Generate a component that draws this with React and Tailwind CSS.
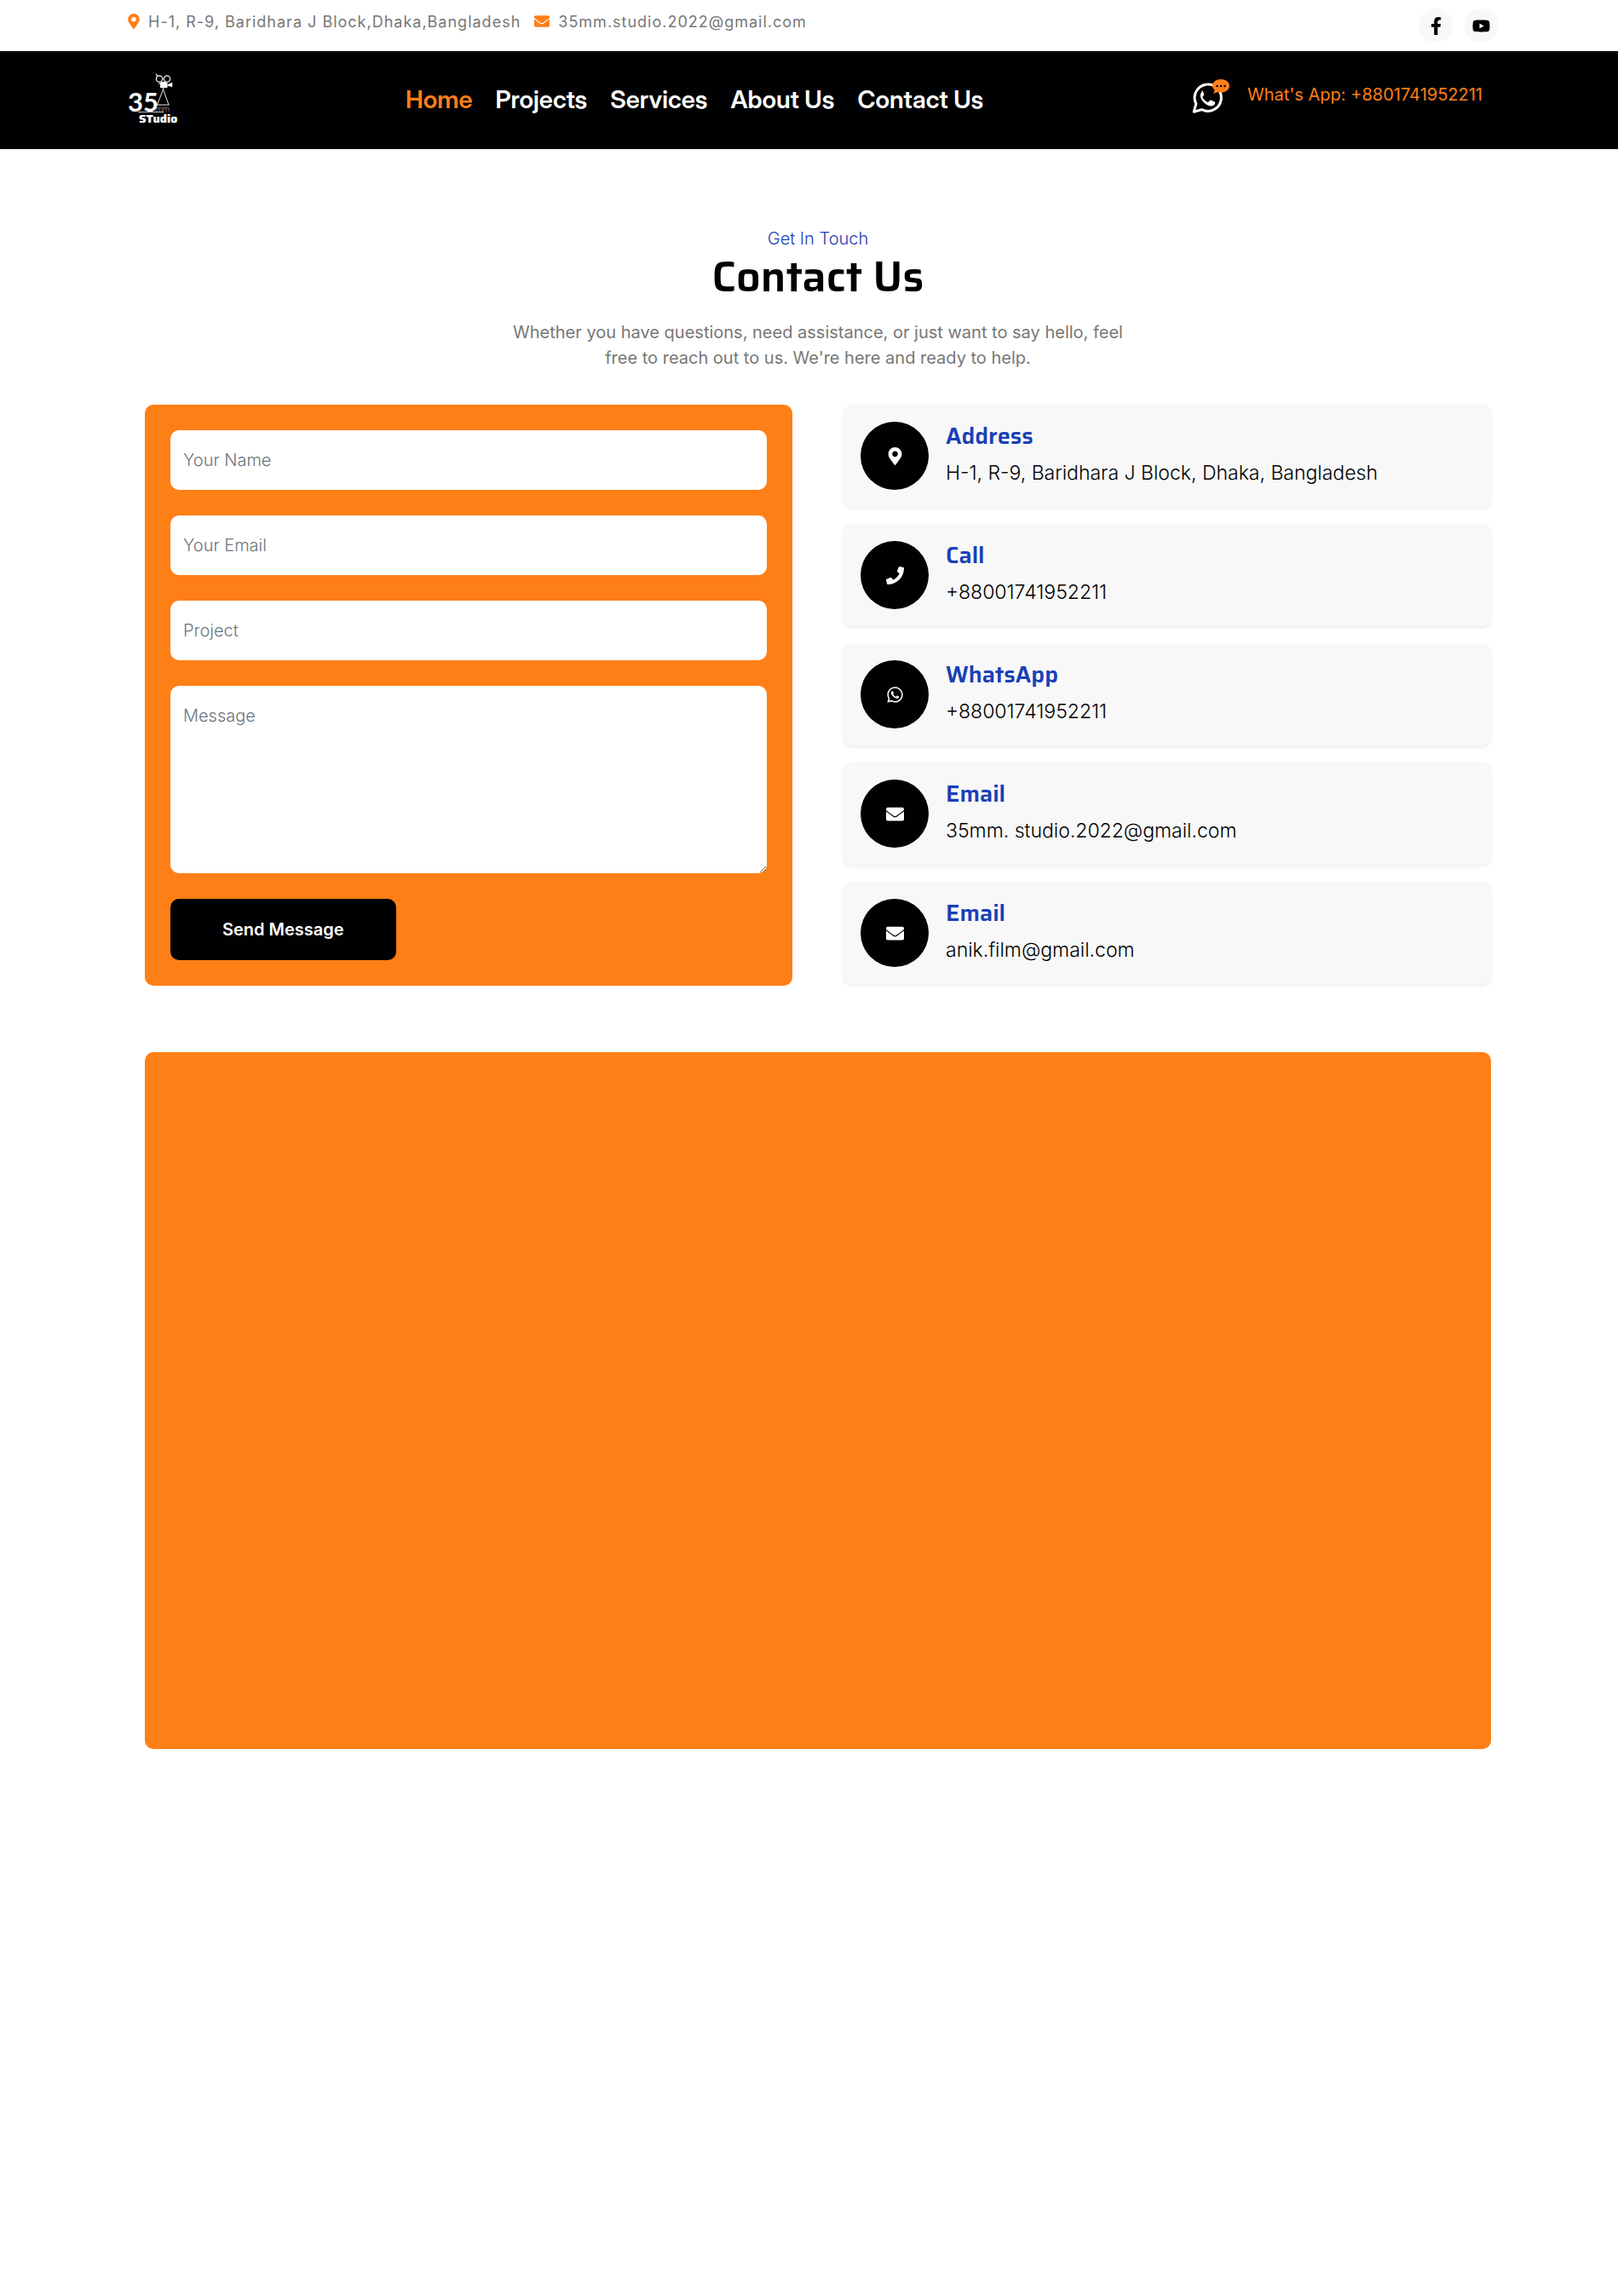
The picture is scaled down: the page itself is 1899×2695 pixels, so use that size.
import React from "react";
import { FaMapMarkerAlt, FaEnvelope, FaFacebookF, FaYoutube, FaPhone, FaWhatsapp } from "react-icons/fa";

const NAV = ["Home", "Projects", "Services", "About Us", "Contact Us"];

const CARDS = [
  { icon: FaMapMarkerAlt, title: "Address", text: "H-1, R-9, Baridhara J Block, Dhaka, Bangladesh" },
  { icon: FaPhone, title: "Call", text: "+88001741952211" },
  { icon: FaWhatsapp, title: "WhatsApp", text: "+88001741952211" },
  { icon: FaEnvelope, title: "Email", text: "35mm. studio.2022@gmail.com" },
  { icon: FaEnvelope, title: "Email", text: "anik.film@gmail.com" },
];

const FIELD =
  "block w-full rounded-[10px] bg-white px-[15px] text-[20px] leading-[30px] font-light outline-none placeholder:text-[#6c757d] placeholder:opacity-100";

function Logo() {
  return (
    <svg viewBox="0 0 64 66" className="h-[66px] w-[64px]" role="img" aria-label="35mm Studio">
      <g fill="none" stroke="#fff">
        <circle cx="37" cy="7.5" r="3.7" strokeWidth="1.2" />
        <circle cx="46" cy="7.5" r="3.7" strokeWidth="1.2" />
        <path d="M33 1.500l2 3.500M39 11.500h6M36 13h2" strokeWidth="1.2" />
        <path d="M41.500 18v3M41.500 20l-7 18M41.500 20l6.500 18M34 38h14.500" strokeWidth="0.9" />
        <path d="M12 46.500h30" strokeWidth="0.8" />
      </g>
      <rect x="38" y="12" width="8.500" height="6" fill="#fff" />
      <path d="M46.500 14.200l5.800-2.400v5.400l-5.800-1.600z" fill="#fff" />
      <text x="0" y="46" fill="#fff" fontFamily="Lato" fontWeight="700" fontSize="31">35</text>
      <text x="33" y="46" fill="#bbb" fontFamily="Roboto" fontWeight="300" fontSize="9">mm</text>
      <text x="13" y="59" fill="#fff" fontFamily="Saira, Roboto" fontWeight="800" fontSize="14">STudio</text>
    </svg>
  );
}

function ChatIcon() {
  return (
    <svg viewBox="0 0 44 42" className="h-[42px] w-[44px]" aria-hidden="true">
      <path d="M2.2 39.2l2.600-9.400A15.600 15.600 0 1 1 11.600 36.600z" fill="none" stroke="#fff" strokeWidth="3" strokeLinejoin="round" />
      <path
        d="M11.5 16c-1.700 1.500-2.300 4.200-1.200 6.800 2.100 5 6.200 8.700 11.200 9.600 2.600.4 5-.9 5.600-3.200.2-.8 0-1.200-.7-1.600l-4-2c-.7-.3-1.100-.2-1.600.4l-1.300 1.600c-.4.500-.8.500-1.400.2-2.500-1.200-4.300-3-5.500-5.300-.3-.6-.2-.9.200-1.300l1.100-1.400c.4-.5.4-.9.200-1.500l-1.500-3.500c-.3-.6-1-.7-1.100.2z"
        fill="#fff"
      />
      <path d="M34 1c5.500 0 10 3.300 10 7.800s-4.500 7.800-10 7.800c-1.300 0-2.600-.2-3.700-.5L25.200 18l1.500-4C25 12.600 24 10.800 24 8.800 24 4.300 28.500 1 34 1z" fill="#ff7f17" />
      <circle cx="29.500" cy="9" r="1.300" fill="#000" />
      <circle cx="34" cy="9" r="1.300" fill="#000" />
      <circle cx="38.500" cy="9" r="1.300" fill="#000" />
    </svg>
  );
}

export default function App() {
  return (
    <div className="min-h-screen bg-white font-['Inter',sans-serif] text-black">
      <div className="flex h-[60px] justify-between pr-[141px] pl-[150px]">
        <div className="flex gap-[16px] pt-[12px] text-[18px] leading-[27px] tracking-[1px] text-[#777]">
          <span className="flex gap-[10px]">
            <FaMapMarkerAlt className="mt-[4px] h-[18px] w-[14px] text-[#ff7f17]" />
            H-1, R-9, Baridhara J Block,Dhaka,Bangladesh
          </span>
          <a href="mailto:35mm.studio.2022@gmail.com" className="flex gap-[10px]">
            <FaEnvelope className="mt-[4px] text-[#ff7f17]" />
            35mm.studio.2022@gmail.com
          </a>
        </div>
        <div className="flex items-center gap-[13px] text-[21px]">
          <a href="#facebook" aria-label="Facebook" className="flex h-10 w-10 items-center justify-center rounded-full bg-[#f8f8f8]">
            <FaFacebookF />
          </a>
          <a href="#youtube" aria-label="YouTube" className="flex h-10 w-10 items-center justify-center rounded-full bg-[#f8f8f8]">
            <FaYoutube />
          </a>
        </div>
      </div>

      <header className="flex h-[115px] items-center bg-[#000103] pr-[159px] pl-[150px]">
        <a href="#home" className="w-1/5">
          <Logo />
        </a>
        <nav className="flex gap-[27px] pb-[2px] pl-[8px] font-['Inter_Display','Inter',sans-serif] text-[29px] leading-[42px] font-semibold text-white">
          {NAV.map((item, i) => (
            <a key={item} href={"#" + item} className={i === 0 ? "text-[#ff7f17]" : ""}>
              {item}
            </a>
          ))}
        </nav>
        <div className="ml-auto flex items-center gap-[21px] pb-[10px]">
          <ChatIcon />
          <a href="tel:+8801741952211" className="pb-[4px] text-[20px] leading-[30px] text-[#ff7f17]">
            What's App: +8801741952211
          </a>
        </div>
      </header>

      <main className="pt-[90px] pr-[149px] pl-[170px]">
        <div className="flex flex-col items-center text-center">
          <p className="text-[20px] leading-[30px] font-light text-[#1840b6]">Get In Touch</p>
          <h1 className="font-['Saira','Roboto',sans-serif] text-[50px] leading-[60px] font-semibold">Contact Us</h1>
          <p className="mt-[20px] max-w-[740px] text-[20px] leading-[30px] text-[#777]">
            Whether you have questions, need assistance, or just want to say hello, feel free to reach out to us. We're
            here and ready to help.
          </p>
        </div>

        <div className="mt-[40px] grid grid-cols-2 items-start gap-[60px]">
          <form className="flex flex-col items-start gap-[30px] rounded-[10px] bg-[#ff7f17] p-[30px]" onSubmit={(e) => e.preventDefault()}>
            <input type="text" aria-label="Your Name" placeholder="Your Name" className={FIELD + " h-[70px]"} />
            <input type="email" aria-label="Your Email" placeholder="Your Email" className={FIELD + " h-[70px]"} />
            <input type="text" aria-label="Project" placeholder="Project" className={FIELD + " h-[70px]"} />
            <textarea aria-label="Message" placeholder="Message" className={FIELD + " h-[220px] resize py-[20px]"} />
            <button type="submit" className="rounded-[10px] bg-[#000103] px-[61px] py-[21px] text-[20px] leading-[30px] font-semibold text-white">
              Send Message
            </button>
          </form>

          <div className="flex flex-col gap-[20px]">
            {CARDS.map(({ icon: Icon, title, text }, i) => (
              <div key={i} className="flex h-[120px] items-start gap-[20px] rounded-[10px] bg-[#f8f8f8] p-[20px] shadow-[0_2px_4px_rgba(0,0,0,0.08)]">
                <span className="flex h-[80px] w-[80px] shrink-0 items-center justify-center rounded-full bg-[#000103] text-[21px] text-white">
                  <Icon />
                </span>
                <div>
                  <h2 className="font-['Saira','Roboto',sans-serif] text-[27px] leading-[33px] font-semibold text-[#1840b6]">{title}</h2>
                  <p className="mt-[9px] text-[23px] leading-[36px] font-light">{text}</p>
                </div>
              </div>
            ))}
          </div>
        </div>

        <section aria-label="Map" className="mt-[78px] h-[818px] rounded-[10px] bg-[#ff7f17]" />
      </main>
    </div>
  );
}
